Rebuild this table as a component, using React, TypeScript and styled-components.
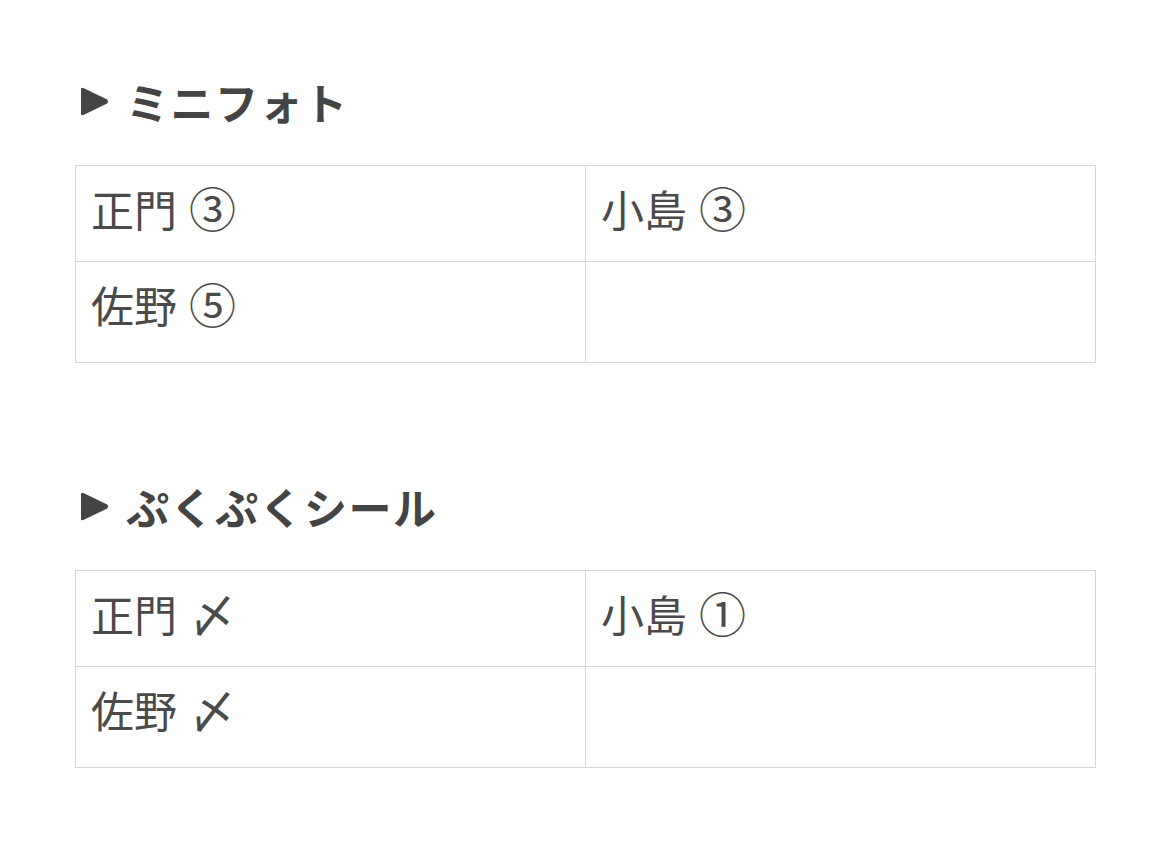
import styled, { createGlobalStyle } from 'styled-components';

const GlobalStyle = createGlobalStyle`
  html, body {
    margin: 0;
    padding: 0;
    background: #ffffff;
  }
  body {
    font-family: "Noto Sans CJK JP", "Noto Sans", sans-serif;
    color: #444444;
  }
`;

const Page = styled.div`
  padding: 71px 75px 0 75px;
  width: 1020px;
`;

const Section = styled.section`
  & + & {
    margin-top: 113px;
  }
`;

const Heading = styled.h2`
  display: flex;
  align-items: center;
  gap: 17px;
  margin: 0 0 34px 0;
  padding-left: 5px;
  height: 60px;
  font-size: 43px;
  font-weight: 700;
  color: #444444;
  letter-spacing: 1.5px;
`;

const Arrow = styled.svg`
  width: 29px;
  height: 29px;
  flex-shrink: 0;
`;

const Table = styled.table`
  width: 1021px;
  border-collapse: collapse;
  table-layout: fixed;
`;

const Row = styled.tr<{ $h: number }>`
  height: ${(p) => p.$h}px;
`;

const Cell = styled.td`
  width: 50%;
  border: 1px solid #d6d6d6;
  padding: 11px 15px 0 15px;
  vertical-align: top;
  font-size: 43px;
  line-height: 60px;
  color: #4a4a4a;
`;

const Mark = styled.span`
  font-size: 47px;
  margin-left: 12px;
`;

type Item = { name: string; mark: string } | null;

const sections: { title: string; rows: Item[][] }[] = [
  {
    title: 'ミニフォト',
    rows: [
      [{ name: '正門', mark: '③' }, { name: '小島', mark: '③' }],
      [{ name: '佐野', mark: '⑤' }, null],
    ],
  },
  {
    title: 'ぷくぷくシール',
    rows: [
      [{ name: '正門', mark: '〆' }, { name: '小島', mark: '①' }],
      [{ name: '佐野', mark: '〆' }, null],
    ],
  },
];

function Triangle() {
  return (
    <Arrow viewBox="0 0 29 29">
      <path
        d="M1 2.5 Q1 0 3.4 1.1 L27.2 12.6 Q29 14.5 27.2 16.4 L3.4 27.9 Q1 29 1 26.5 Z"
        fill="#444444"
      />
    </Arrow>
  );
}

export default function App() {
  return (
    <>
      <GlobalStyle />
      <Page>
        {sections.map((s) => (
          <Section key={s.title}>
            <Heading>
              <Triangle />
              {s.title}
            </Heading>
            <Table>
              <tbody>
                {s.rows.map((r, i) => (
                  <Row key={i} $h={i === 0 ? 96 : 101}>
                    {r.map((c, j) => (
                      <Cell key={j}>
                        {c && (
                          <>
                            {c.name}
                            <Mark>{c.mark}</Mark>
                          </>
                        )}
                      </Cell>
                    ))}
                  </Row>
                ))}
              </tbody>
            </Table>
          </Section>
        ))}
      </Page>
    </>
  );
}
